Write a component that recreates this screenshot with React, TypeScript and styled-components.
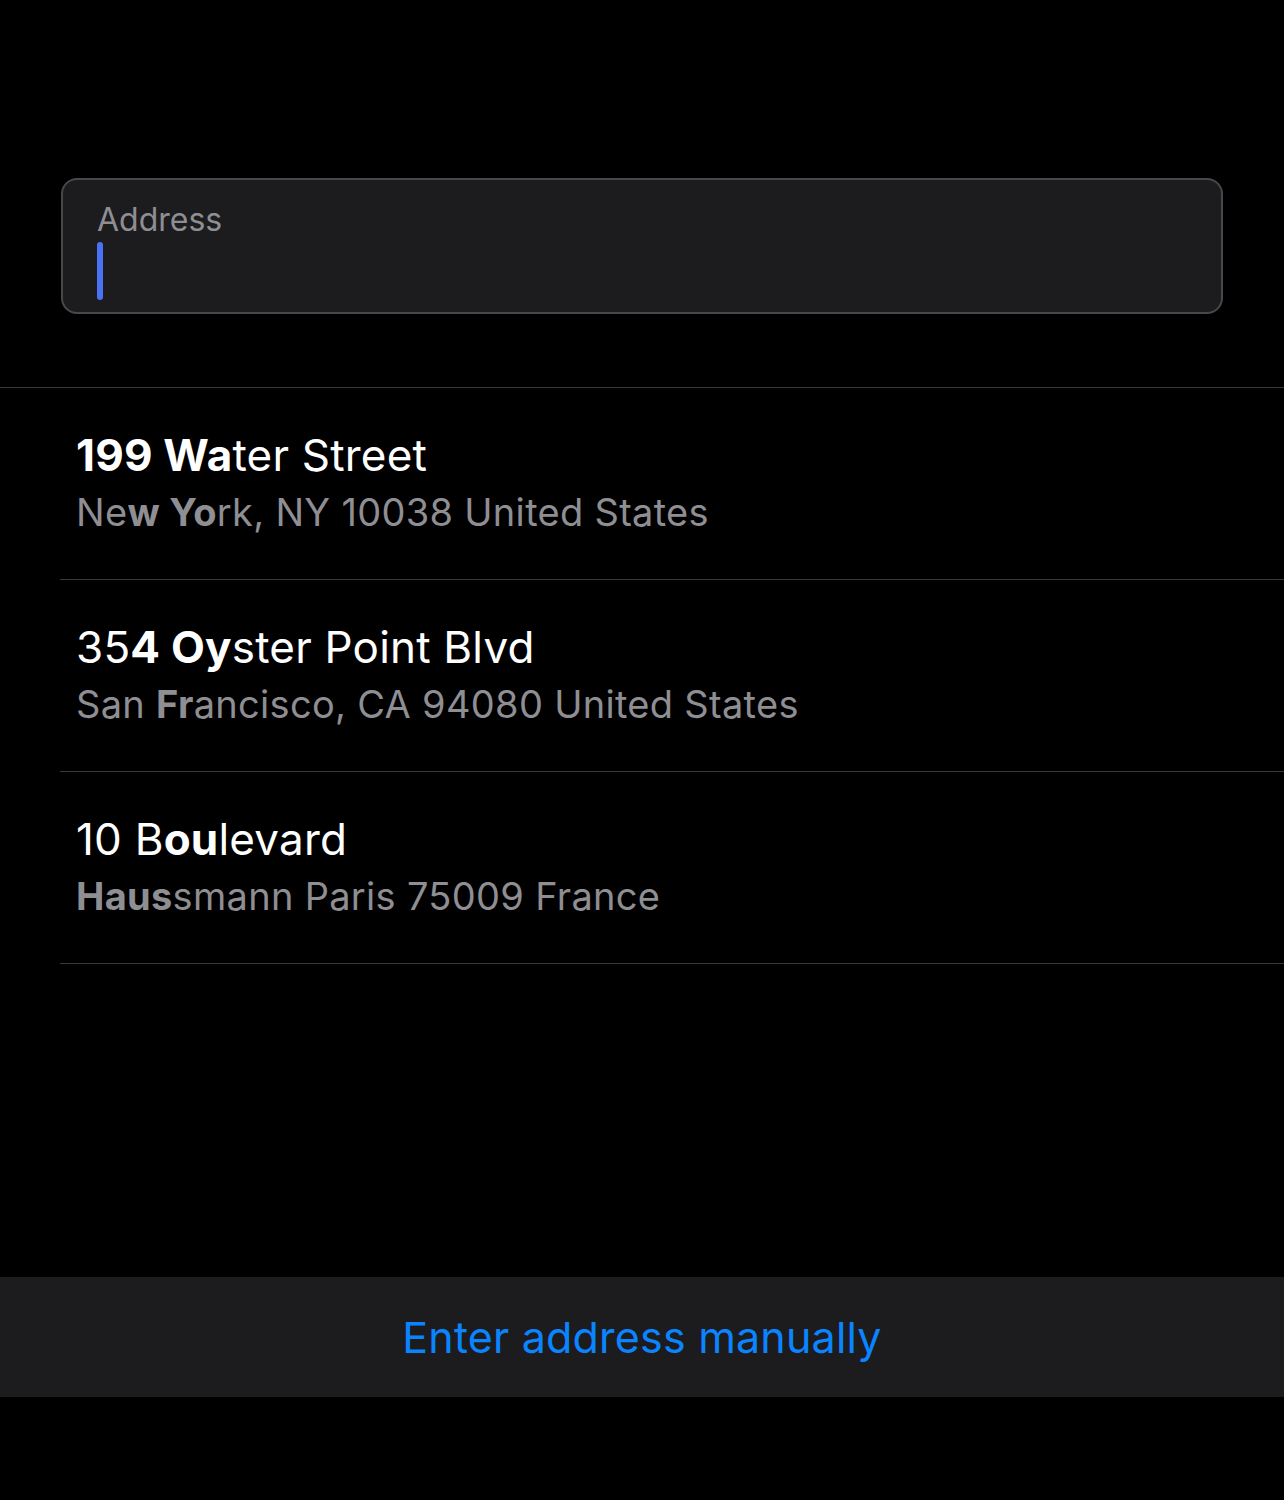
import React from 'react';
import styled, { createGlobalStyle } from 'styled-components';

const GlobalStyle = createGlobalStyle`
    html, body {
        margin: 0;
        padding: 0;
        background: #000;
    }
    body {
        font-family: Inter, "Noto Sans", "Liberation Sans", sans-serif;
        -webkit-font-smoothing: antialiased;
    }
`;

const Screen = styled.div`
    display: flex;
    flex-direction: column;
    width: 1284px;
    height: 1500px;
    background: #000;
    color: #fff;
`;

const FieldWrap = styled.div`
    padding: 178px 61px 0 61px;
`;

const Field = styled.div`
    height: 136px;
    box-sizing: border-box;
    border: 2.5px solid #48484a;
    border-radius: 16px;
    background: #1c1c1e;
    padding: 21px 34px 0 34px;
    display: flex;
    flex-direction: column;
`;

const FieldLabel = styled.label`
    font-size: 32px;
    line-height: 38px;
    color: #8e8e93;
`;

const Caret = styled.span`
    display: block;
    width: 6px;
    height: 58px;
    margin-top: 3px;
    border-radius: 3px;
    background: #4a72f5;
`;

const List = styled.ul`
    list-style: none;
    margin: 73px 0 0 0;
    padding: 0;
    border-top: 1px solid #38383a;
`;

const Row = styled.li`
    margin-left: 60px;
    height: 192px;
    box-sizing: border-box;
    border-bottom: 1px solid #38383a;
    padding: 41px 0 0 16px;
`;

const Title = styled.div`
    font-size: 44px;
    line-height: 52px;
    color: #fff;
    letter-spacing: 0.2px;
`;

const Subtitle = styled.div`
    font-size: 38px;
    line-height: 46px;
    margin-top: 8px;
    color: #8e8e93;
    letter-spacing: 0.3px;
`;

const Match = styled.b`
    font-weight: 700;
`;

const Spacer = styled.div`
    flex: 1;
`;

const BottomBar = styled.button`
    height: 120px;
    margin-bottom: 103px;
    border: none;
    background: #1c1c1e;
    color: #0a84ff;
    font-family: inherit;
    font-size: 43px;
    letter-spacing: 0.2px;
    cursor: pointer;
`;

type Part = { text: string; bold?: boolean };

const results: { title: Part[]; subtitle: Part[] }[] = [
    {
        title: [{ text: '199 Wa', bold: true }, { text: 'ter Street' }],
        subtitle: [{ text: 'Ne' }, { text: 'w Yo', bold: true }, { text: 'rk, NY 10038 United States' }],
    },
    {
        title: [{ text: '35' }, { text: '4 Oy', bold: true }, { text: 'ster Point Blvd' }],
        subtitle: [{ text: 'San ' }, { text: 'Fr', bold: true }, { text: 'ancisco, CA 94080 United States' }],
    },
    {
        title: [{ text: '10 B' }, { text: 'ou', bold: true }, { text: 'levard' }],
        subtitle: [{ text: 'Haus', bold: true }, { text: 'smann Paris 75009 France' }],
    },
];

const renderParts = (parts: Part[]) =>
    parts.map((p, i) => (p.bold ? <Match key={i}>{p.text}</Match> : <React.Fragment key={i}>{p.text}</React.Fragment>));

export default function App() {
    return (
        <Screen>
            <GlobalStyle />
            <FieldWrap>
                <Field>
                    <FieldLabel>Address</FieldLabel>
                    <Caret />
                </Field>
            </FieldWrap>
            <List>
                {results.map((r, i) => (
                    <Row key={i}>
                        <Title>{renderParts(r.title)}</Title>
                        <Subtitle>{renderParts(r.subtitle)}</Subtitle>
                    </Row>
                ))}
            </List>
            <Spacer />
            <BottomBar>Enter address manually</BottomBar>
        </Screen>
    );
}
